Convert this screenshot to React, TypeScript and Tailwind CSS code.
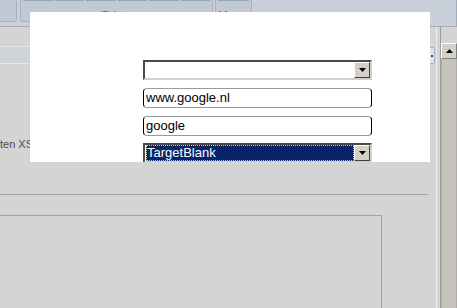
import React from "react";

function Arrow({ up = false }: { up?: boolean }) {
  return (
    <svg width="7" height="4" viewBox="0 0 7 4" className="block">
      {up ? <polygon points="0,4 7,4 3.5,0" fill="#000" /> : <polygon points="0,0 7,0 3.5,4" fill="#000" />}
    </svg>
  );
}

function DropButton() {
  return (
    <div className="w-[16px] h-[16px] bg-[#d4d0c8] border border-t-[#ffffff] border-l-[#ffffff] border-b-[#404040] border-r-[#404040] flex items-center justify-center shrink-0">
      <Arrow />
    </div>
  );
}

function Select({ value, focused = false }: { value: string; focused?: boolean }) {
  return (
    <div className="w-[229px] h-[20px] border-2 border-t-[#4a4a4a] border-l-[#4a4a4a] border-b-[#d4d0c8] border-r-[#d4d0c8] bg-white flex items-stretch">
      <div className="flex-1 flex items-center pl-[1px] min-w-0">
        {focused ? (
          <div className="h-[16px] w-full bg-[#0a246a] outline-1 outline-dotted outline-[#c8c8a0] -outline-offset-1 text-white text-[13px] leading-[16px] pl-[1px] whitespace-nowrap">
            {value}
          </div>
        ) : (
          <span className="text-[13px] leading-[16px]">{value}</span>
        )}
      </div>
      <DropButton />
    </div>
  );
}

function Input({ value }: { value: string }) {
  return (
    <div className="w-[229px] h-[20px] rounded-[4px] border border-x-black border-y-[#9a9a9a] bg-white flex items-center pl-[2px] text-[13px] leading-[18px] text-black">
      {value}
    </div>
  );
}

export default function App() {
  return (
    <div
      className="w-[457px] h-[308px] relative overflow-hidden bg-[#d4d4d4]"
      style={{ fontFamily: '"Liberation Sans", Arial, sans-serif' }}
    >
      <div className="flex flex-col h-full">
        {/* Ribbon */}
        <div className="h-[27px] shrink-0 bg-[#c9d0d9] border-b border-[#a3adb9] flex items-start">
          <div className="w-[17px] h-[22px] bg-[#c0c9d5] border-r border-b border-[#a6b0bd] rounded-br-[3px]" />
          <div className="ml-[3px] w-[193px] h-[22px] bg-[#c0c9d5] border-x border-b border-[#a6b0bd] rounded-b-[3px] flex flex-col">
            <div className="h-[2px] flex gap-[2px] px-[2px]">
              <div className="flex-1 border-b border-x border-[#9aa6b5]" />
              <div className="flex-1 border-b border-x border-[#9aa6b5]" />
              <div className="flex-1 border-b border-x border-[#9aa6b5]" />
              <div className="flex-1 border-b border-x border-[#9aa6b5]" />
              <div className="flex-1 border-b border-x border-[#9aa6b5]" />
              <div className="flex-1 border-b border-x border-[#9aa6b5]" />
            </div>
            <div className="text-[11px] leading-[13px] text-[#5a6a80] mt-[8px] pl-[81px]">Tekst</div>
          </div>
          <div className="ml-[2px] w-[37px] h-[22px] bg-[#c0c9d5] border-x border-b border-[#a6b0bd] rounded-b-[3px] flex flex-col">
            <div className="h-[2px] mx-[2px] border-b border-x border-[#9aa6b5]" />
            <div className="text-[11px] leading-[13px] text-[#5a6a80] text-center mt-[8px]">Macro</div>
          </div>
          <div className="flex-1" />
          <div className="w-[1px] h-[26px] bg-[#a3adb9]" />
        </div>

        {/* Body */}
        <div className="flex flex-1 min-h-0">
          <div className="w-[430px] shrink-0 flex flex-col">
            <div className="h-[19px]" />
            <div className="h-[18px] border-t border-[#e8e8e8] border-b border-[#bcc2c9] bg-[#d0d3d7]" />
            <div className="h-[72px]" />
            <div className="text-[11px] leading-[16px] text-[#4e4e4e] whitespace-nowrap">ten XSLT</div>
            <div className="h-[42px]" />
            <div className="w-[428px] border-t border-[#a3a3a3]" />
            <div className="h-[20px]" />
            <div className="w-[383px] -ml-[1px] flex-1 border-t border-r border-[#a3a3a3]" />
          </div>
          {/* right edge */}
          <div className="w-[6px] shrink-0 flex flex-col">
            <div className="h-[20px]" />
            <div className="w-[5px] h-[17px] bg-[#dce5ef] border-y border-r border-[#9fb3c8] rounded-r-[2px] flex items-center justify-end pr-[1px]">
              <div className="w-[2px] h-[2px] bg-[#3a4a60]" />
            </div>
          </div>
          <div className="w-[1px] shrink-0 bg-[#ececec]" />
          <div className="w-[3px] shrink-0" />
          <div className="w-[1px] shrink-0 bg-[#9c9c9c]" />
          <div className="w-[16px] shrink-0 flex flex-col">
            <div className="h-[16px]" />
            <div className="h-[16px] bg-[#d4d0c8] border border-t-[#ffffff] border-l-[#ffffff] border-b-[#808080] border-r-[#808080] flex items-center justify-center">
              <Arrow up />
            </div>
            <div className="flex-1 bg-[#c6c3bd] border-x border-[#b0ada8]" />
          </div>
        </div>
      </div>

      {/* Popup */}
      <div className="absolute left-[30px] top-[12px] w-[400px] h-[150px] bg-white overflow-hidden">
        <div className="pl-[113px] pt-[48px] flex flex-col">
          <Select value="" />
          <div className="h-[8px]" />
          <Input value="www.google.nl" />
          <div className="h-[8px]" />
          <Input value="google" />
          <div className="h-[7px]" />
          <Select value="TargetBlank" focused />
        </div>
      </div>
    </div>
  );
}
